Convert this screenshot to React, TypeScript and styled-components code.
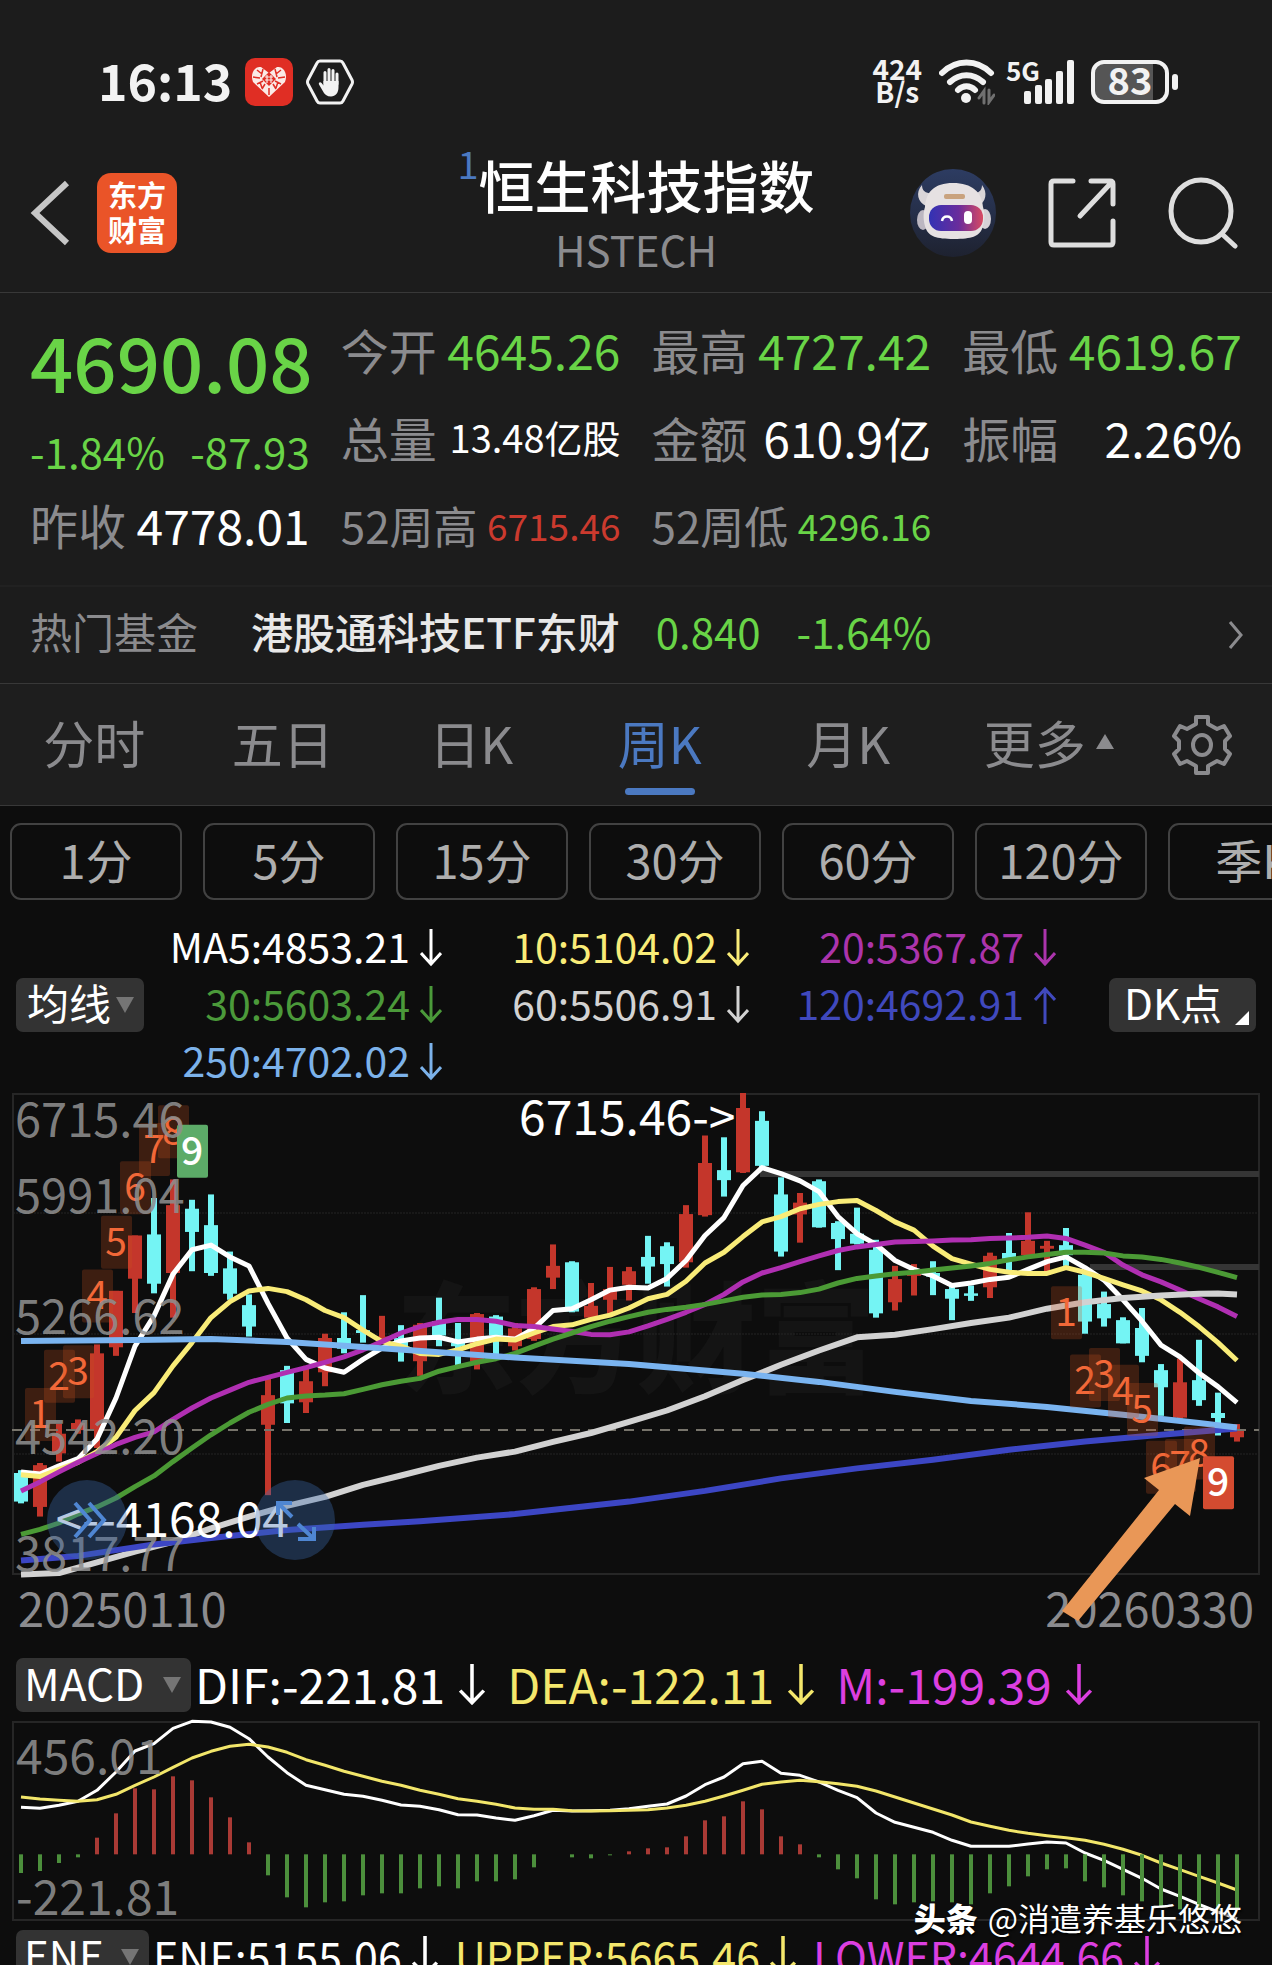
import React from "react";
import styled, { createGlobalStyle } from "styled-components";

const GlobalStyle = createGlobalStyle`
  * { box-sizing: border-box; }
  body {
    margin: 0;
    background: #0d0d0d;
    font-family: "Noto Sans CJK SC", "Noto Sans", sans-serif;
  }
  button { font-family: inherit; margin: 0; padding: 0; border: 0; background: none; color: inherit; cursor: pointer; }
  svg { display: block; flex: none; }
`;

const GREEN = "#69d447";
const RED = "#c4362b";
const CYAN = "#74f4f4";
const GREY = "#8b8b8e";
const BLUE = "#4b79c1";

/* ---------- layout ---------- */

const Screen = styled.main`
  position: relative;
  height: 100vh;
  overflow: hidden;
  background: #0d0d0d;
  color: #fff;
`;

const Top = styled.div`
  background: #1c1c1c;
`;

const StatusBar = styled.div`
  height: 130px;
  padding: 34px 94px 0 98px;
  display: flex;
  align-items: center;
  justify-content: space-between;
  color: #f2f2f2;
  font-weight: 700;
`;

const StatusGroup = styled.div<{ $gap: number }>`
  display: flex;
  align-items: center;
  gap: ${(p) => p.$gap}px;
`;

const Clock = styled.span`
  font-size: 50px;
  line-height: 56px;
  padding-bottom: 6px;
`;

const NetSpeed = styled.span`
  font-size: 28px;
  line-height: 23px;
  text-align: center;
  padding-bottom: 4px;
`;

const Signal = styled.div`
  display: flex;
  align-items: flex-start;
  margin-left: -6px;
`;

const SignalLabel = styled.span`
  font-size: 26px;
  line-height: 20px;
  margin-right: -16px;
`;

const Battery = styled.div`
  display: flex;
  align-items: center;
  gap: 3px;
  &::after {
    content: "";
    width: 6px;
    height: 16px;
    border-radius: 3px;
    background: #f2f2f2;
  }
`;

const BatteryBody = styled.span`
  width: 78px;
  height: 44px;
  border: 4px solid #f2f2f2;
  border-radius: 13px;
  background: linear-gradient(90deg, #555 83%, transparent 83%);
  font-size: 38px;
  line-height: 30px;
  text-align: center;
`;

const Header = styled.header`
  height: 163px;
  padding: 4px 30px 0;
  border-bottom: 1px solid #383838;
  display: grid;
  grid-template-columns: 1fr auto 1fr;
  align-items: center;
`;

const HeaderSide = styled.div<{ $end?: boolean }>`
  display: flex;
  align-items: center;
  justify-content: ${(p) => (p.$end ? "flex-end" : "flex-start")};
  gap: ${(p) => (p.$end ? 52 : 27)}px;
  padding-right: ${(p) => (p.$end ? 4 : 0)}px;
`;

const AppLogo = styled.span`
  width: 80px;
  height: 80px;
  border-radius: 14px;
  background: #ea5428;
  font-size: 29px;
  font-weight: 700;
  line-height: 35px;
  text-align: center;
  padding-top: 4px;
`;

const TitleBlock = styled.div`
  text-align: center;
`;

const Title = styled.h1`
  margin: 0;
  display: flex;
  justify-content: center;
  font-size: 56px;
  font-weight: 500;
  line-height: 72px;
  padding-bottom: 6px;
`;

const TitleMark = styled.sup`
  font-size: 38px;
  font-weight: 400;
  line-height: 30px;
  color: ${BLUE};
`;

const Subtitle = styled.div`
  font-size: 42px;
  line-height: 46px;
  padding-bottom: 6px;
  color: ${GREY};
`;

const Quote = styled.section`
  height: 294px;
  padding: 12px 30px 0;
  border-bottom: 2px solid #212121;
  display: grid;
  grid-template-columns: repeat(4, minmax(0, 1fr));
  column-gap: 31px;
  align-items: start;
`;

const QuoteMain = styled.div`
  padding-top: 4px;
`;

const Price = styled.div`
  font-size: 76px;
  font-weight: 500;
  line-height: 102px;
  color: ${GREEN};
`;

const Change = styled.div`
  display: flex;
  justify-content: space-between;
  font-size: 42px;
  line-height: 80px;
  color: ${GREEN};
`;

const QuoteGrid = styled.div`
  grid-column: 2 / 5;
  display: grid;
  grid-template-columns: repeat(3, minmax(0, 1fr));
  column-gap: 31px;
`;

const StatRow = styled.div<{ $h: number }>`
  height: ${(p) => p.$h}px;
  display: flex;
  align-items: center;
  justify-content: space-between;
  white-space: nowrap;
`;

const StatLabel = styled.span<{ $size: number }>`
  font-size: ${(p) => p.$size}px;
  line-height: 60px;
  color: ${GREY};
`;

const StatValue = styled.span<{ $size: number; $color: string }>`
  font-size: ${(p) => p.$size}px;
  line-height: 60px;
  color: ${(p) => p.$color};
`;

const FundRow = styled.a`
  height: 97px;
  padding: 0 28px 9px 30px;
  border-bottom: 1px solid #383838;
  display: flex;
  align-items: center;
  color: #e8e8e8;
  text-decoration: none;
  font-size: 42px;
  line-height: 60px;
  white-space: nowrap;
  svg { margin-left: auto; margin-top: 8px; }
`;

const FundLabel = styled.span`
  color: ${GREY};
  margin-right: 53px;
`;

const FundName = styled.span`
  font-weight: 500;
  margin-right: 36px;
`;

const FundValue = styled.span`
  color: ${GREEN};
  margin-right: 36px;
`;

const Tabs = styled.nav`
  height: 122px;
  background: #1e1e1e;
  border-bottom: 1px solid #383838;
  display: grid;
  grid-template-columns: repeat(6, 1fr) 141px;
`;

const Tab = styled.button<{ $active?: boolean; $more?: boolean }>`
  position: relative;
  display: flex;
  align-items: center;
  justify-content: center;
  gap: 10px;
  padding-bottom: 6px;
  padding-left: ${(p) => (p.$more ? 24 : 0)}px;
  font-size: 51px;
  line-height: 70px;
  color: ${(p) => (p.$active ? BLUE : GREY)};
  &::after {
    content: "";
    display: ${(p) => (p.$active ? "block" : "none")};
    position: absolute;
    bottom: 10px;
    left: 50%;
    width: 70px;
    margin-left: -35px;
    height: 7px;
    border-radius: 4px;
    background: ${BLUE};
  }
`;

const SettingsButton = styled.button`
  display: flex;
  align-items: center;
  justify-content: center;
`;

const Chips = styled.div`
  display: flex;
  gap: 21px;
  padding: 17px 10px 0;
  overflow: hidden;
`;

const Chip = styled.button`
  flex: none;
  width: 172px;
  height: 77px;
  border: 2px solid #424242;
  border-radius: 11px;
  font-size: 47px;
  line-height: 66px;
  padding-bottom: 6px;
  color: #aeaeae;
`;

const Legend = styled.div`
  display: flex;
  align-items: center;
  padding: 19px 16px 3px;
`;

const LegendGrid = styled.div`
  flex: 1;
  display: grid;
  grid-template-columns: repeat(3, minmax(0, 1fr));
  margin-left: -9px;
  margin-right: 53px;
`;

const PickerButton = styled.button<{ $w: number; $size?: number }>`
  flex: none;
  width: ${(p) => p.$w}px;
  height: 54px;
  border-radius: 7px;
  background: #333;
  font-size: ${(p) => p.$size ?? 42}px;
  line-height: 48px;
  display: flex;
  align-items: center;
  justify-content: space-between;
  padding: 0 10px 0 8px;
  white-space: nowrap;
  span { padding-bottom: 6px; }
`;

const MaButton = styled(PickerButton)`
  padding-left: 11px;
`;

const DkButton = styled(PickerButton)`
  padding: 0 7px 0 15px;
  svg { align-self: flex-end; margin-bottom: 7px; }
`;

const Reading = styled.span<{ $color: string; $size: number }>`
  display: flex;
  align-items: center;
  justify-content: flex-end;
  gap: ${(p) => (p.$size > 44 ? 14 : 10)}px;
  height: 57px;
  font-size: ${(p) => p.$size}px;
  line-height: 50px;
  color: ${(p) => p.$color};
  white-space: nowrap;
  span { padding-bottom: 5px; }
`;

const ChartFrame = styled.div`
  padding: 0 12px;
`;

const ChartSvg = styled.svg`
  width: 100%;
  height: auto;
  position: relative;
  overflow: visible;
  text { font-family: "Noto Sans CJK SC", "Noto Sans", sans-serif; }
`;

const Dates = styled.div`
  display: flex;
  justify-content: space-between;
  padding: 0 18px;
  height: 84px;
  font-size: 47px;
  line-height: 64px;
  color: ${GREY};
`;

const IndicatorRow = styled.div<{ $gap: number }>`
  display: flex;
  align-items: center;
  height: 52px;
  padding: 0 16px;
  gap: ${(p) => p.$gap}px;
`;

const IndicatorLead = styled.div`
  display: flex;
  align-items: center;
  gap: 4px;
`;

const MacdFrame = styled(ChartFrame)`
  padding-top: 10px;
  padding-bottom: 10px;
`;

const Watermark = styled.div`
  position: absolute;
  right: 30px;
  bottom: 25px;
  font-size: 32px;
  line-height: 46px;
  text-shadow: 1px 2px 2px rgba(0, 0, 0, 0.8);
  white-space: nowrap;
  b { font-weight: 900; margin-right: 10px; }
`;

/* ---------- data ---------- */

// [rising, high, low, body top, body bottom]; 2.8 levels make one pixel, measured down from the frame.
const LEVEL = 2.8;
const TOP_LEVEL = 36;
type Candle = [number, number, number, number, number];
const candles: Candle[] = [
  [0, 1092, 1185, 1100, 1180], [1, 1072, 1222, 1078, 1195], [1, 962, 1068, 990, 1045], [1, 950, 990, 960, 980],
  [1, 740, 1030, 765, 980], [1, 590, 772, 590, 748], [1, 435, 652, 435, 556], [0, 330, 597, 432, 570],
  [1, 278, 665, 350, 540], [0, 335, 535, 360, 425], [0, 320, 548, 406, 540], [0, 480, 615, 527, 598],
  [0, 600, 718, 630, 690], [1, 830, 1162, 882, 965], [0, 800, 960, 812, 905], [1, 800, 932, 843, 902],
  [1, 710, 857, 722, 818], [0, 650, 765, 722, 752], [0, 602, 735, 700, 708], [1, 660, 725, 718, 728],
  [0, 686, 788, 722, 745], [1, 680, 828, 685, 787], [0, 609, 745, 675, 715], [0, 680, 798, 736, 745],
  [1, 652, 810, 655, 788], [0, 658, 768, 662, 715], [1, 680, 757, 695, 745], [1, 580, 730, 585, 725],
  [1, 460, 585, 520, 553], [0, 507, 650, 510, 648], [1, 568, 668, 632, 665], [1, 523, 662, 585, 615],
  [1, 523, 617, 535, 573], [0, 436, 570, 495, 522], [0, 454, 578, 465, 515], [1, 350, 525, 375, 510],
  [1, 155, 382, 232, 378], [0, 160, 326, 252, 280], [1, 36, 260, 78, 258], [0, 87, 245, 114, 240],
  [0, 272, 494, 320, 480], [1, 316, 455, 343, 376], [0, 278, 413, 283, 412], [0, 395, 532, 400, 445],
  [0, 357, 460, 430, 458], [0, 447, 665, 475, 653], [1, 520, 645, 557, 622], [1, 515, 603, 540, 548],
  [0, 507, 602, 540, 550], [0, 570, 672, 585, 612], [0, 575, 618, 597, 604], [1, 483, 610, 492, 580],
  [0, 428, 540, 484, 500], [1, 370, 495, 450, 490], [1, 450, 535, 464, 472], [0, 414, 520, 462, 490],
  [0, 540, 710, 545, 676], [0, 592, 690, 627, 667], [0, 664, 737, 672, 737], [0, 638, 790, 694, 772],
  [0, 795, 940, 812, 860], [1, 780, 948, 846, 945], [0, 727, 912, 840, 896], [0, 875, 995, 932, 946],
  [1, 963, 1012, 980, 1000],
];

const ma5 = [1097, 1103, 1080, 1060, 1005, 890, 745, 660, 543, 475, 462, 495, 520, 625, 722, 782, 806, 818, 782, 750, 730, 722, 720, 733, 725, 720, 725, 695, 645, 640, 615, 588, 580, 582, 555, 505, 435, 385, 295, 245, 262, 282, 312, 382, 430, 460, 505, 530, 548, 575, 568, 558, 552, 530, 508, 495, 525, 560, 615, 675, 742, 775, 820, 858, 903];
const ma10 = [1105, 1110, 1090, 1070, 1040, 1000, 925, 875, 800, 735, 665, 620, 590, 583, 592, 615, 645, 665, 700, 732, 745, 765, 768, 755, 738, 725, 728, 708, 690, 685, 670, 658, 638, 612, 600, 563, 512, 482, 438, 397, 382, 360, 348, 340, 337, 365, 397, 420, 465, 500, 515, 530, 538, 541, 541, 525, 538, 555, 573, 590, 615, 650, 690, 735, 785];
const ma20 = [1150, 1125, 1097, 1070, 1045, 1020, 1000, 985, 950, 918, 890, 868, 846, 832, 818, 805, 790, 775, 755, 732, 708, 690, 678, 670, 670, 675, 687, 690, 697, 704, 712, 713, 705, 688, 670, 650, 628, 600, 565, 540, 525, 508, 492, 477, 467, 460, 453, 452, 450, 448, 447, 443, 442, 440, 436, 443, 462, 482, 518, 545, 565, 588, 612, 635, 662];
const ma30 = [1272, 1258, 1240, 1215, 1195, 1170, 1138, 1108, 1068, 1030, 993, 960, 930, 908, 890, 884, 882, 878, 866, 853, 843, 835, 815, 802, 790, 780, 765, 745, 725, 708, 690, 675, 662, 650, 642, 636, 628, 618, 608, 602, 600, 595, 585, 568, 555, 548, 542, 538, 532, 526, 520, 513, 503, 495, 488, 482, 482, 484, 492, 495, 502, 512, 524, 538, 553];
const ma60 = [[0, 1384], [2, 1380], [4, 1350], [6, 1320], [8, 1293], [10, 1255], [12, 1222], [14, 1192], [16, 1167], [18, 1133], [20, 1107], [22, 1080], [24, 1057], [26, 1040], [28, 1013], [30, 988], [32, 957], [34, 925], [36, 885], [38, 840], [40, 797], [42, 757], [44, 720], [46, 713], [48, 697], [50, 680], [52, 665], [54, 640], [56, 622], [58, 610], [60, 603], [62, 598], [63, 597], [64, 600]];
const ma120 = [[0, 1345], [3, 1332], [7, 1300], [10, 1282], [14, 1260], [18, 1245], [21, 1235], [26, 1215], [32, 1180], [36, 1150], [40, 1115], [44, 1087], [48, 1063], [52, 1035], [56, 1012], [60, 993], [64, 975]];
const ma250 = [[0, 730], [6, 728], [10, 725], [14, 733], [18, 747], [22, 762], [26, 777], [32, 795], [38, 822], [42, 845], [46, 873], [50, 898], [54, 915], [58, 937], [62, 960], [64, 973]];

// [candle index, level of the upper edge, digit]
const counts: [number, number, number][] = [
  [1, 862, 1], [2, 755, 2], [3, 742, 3], [4, 530, 4], [5, 380, 5], [6, 227, 6], [7, 120, 7], [8, 70, 8], [9, 125, 9],
  [55, 577, 1], [56, 768, 2], [57, 750, 3], [58, 797, 4], [59, 848, 5], [60, 1010, 6], [61, 1005, 7], [62, 970, 8], [63, 1053, 9],
];

const macdBars = [728, 722, 698, 681, 622, 549, 474, 477, 438, 450, 501, 561, 636, 735, 801, 831, 816, 813, 795, 789, 789, 774, 768, 774, 753, 753, 747, 711, 672, 681, 684, 675, 663, 654, 651, 618, 570, 558, 513, 537, 618, 642, 681, 717, 744, 807, 822, 816, 813, 816, 822, 789, 768, 738, 717, 714, 753, 771, 795, 813, 828, 837, 840, 840, 838];
const dif = [531, 534, 525, 513, 480, 425, 362, 340, 294, 273, 275, 291, 325, 380, 427, 465, 478, 492, 498, 510, 524, 528, 538, 553, 554, 563, 570, 556, 540, 542, 541, 540, 535, 528, 521, 497, 463, 440, 400, 393, 429, 435, 455, 480, 502, 548, 576, 591, 606, 630, 648, 648, 648, 641, 635, 638, 668, 690, 717, 744, 776, 798, 822, 845, 865];
const dea = [500, 506, 510, 513, 508, 492, 465, 440, 411, 383, 363, 348, 342, 350, 366, 388, 405, 423, 438, 453, 465, 480, 492, 505, 513, 522, 533, 537, 537, 541, 542, 541, 540, 538, 533, 525, 513, 497, 480, 462, 455, 450, 454, 460, 468, 482, 500, 518, 536, 554, 575, 588, 600, 609, 616, 622, 630, 642, 657, 675, 698, 718, 738, 758, 779];

const barX = (i: number) => 9 + 19 * i;
const levelY = (v: number) => (v - TOP_LEVEL) / LEVEL;
const macdY = (v: number) => (v - 272) / 3;

const trace = (values: number[], y: (v: number) => number) =>
  values.map((v, i) => `${barX(i)},${y(v).toFixed(1)}`).join(" ");
const tracePairs = (pairs: number[][]) =>
  pairs.map(([i, v]) => `${barX(i)},${levelY(v).toFixed(1)}`).join(" ");

/* ---------- icons ---------- */

const Arrow = ({ up, big }: { up?: boolean; big?: boolean }) => (
  <svg width={big ? 26 : 22} height={big ? 42 : 38} viewBox="0 0 22 38" preserveAspectRatio="none" fill="none" stroke="currentColor" strokeWidth="3" role="img" aria-label={up ? "上升" : "下降"}>
    {up ? <path d="M11 38V3M1 14L11 3l10 11" /> : <path d="M11 0v35M1 24l10 11 10-11" />}
  </svg>
);

const DownTriangle = () => (
  <svg width="18" height="16" viewBox="0 0 18 16" fill="#757575"><path d="M0 0h18L9 16z" /></svg>
);

const PddIcon = () => (
  <svg width="48" height="48" viewBox="0 0 48 48">
    <rect width="48" height="48" rx="10" fill="#e02e24" />
    <path d="M24 39L8 24c-2-5-1-10 2-13 2-2 4-2 6-2l8 6 8-6c2 0 4 0 6 2 3 3 4 8 2 13z" fill="#fbeae6" />
    <path d="M12 12l5 4M18 11l-2 8M30 11l2 8M36 12l-5 4M8 19l7 1M33 20l7-1M12 26l6-3M36 26l-6-3M17 31l3-5M31 31l-3-5M24 37v-7M15 24l2 6M33 24l-2 6" stroke="#e02e24" strokeWidth="1.500" />
    <path d="M24 14l7 7-7 7-7-7z" fill="#e02e24" />
    <path d="M20 19h8M20 22h8M22 17v8M26 17v8" stroke="#fbeae6" strokeWidth="1.200" />
  </svg>
);

const HandIcon = () => (
  <svg width="48" height="46" viewBox="0 0 48 46">
    <path d="M14 2h20q2 0 3 2l9 17q1 2 0 4l-9 17q-1 2-3 2H14q-2 0-3-2L2 25q-1-2 0-4l9-17q1-2 3-2z" fill="none" stroke="#f2f2f2" strokeWidth="3" />
    <path d="M19 25V13.500M23 24V10.500M27 24V11.500M31 25V15" stroke="#f2f2f2" strokeWidth="3" strokeLinecap="round" />
    <path d="M17.500 22h15v6c0 6-3 9.500-7.500 9.500-4 0-6.500-2-8.500-6L13 25.500c-.800-2 1.300-3 2.600-1.500l1.900 2.500z" fill="#f2f2f2" />
  </svg>
);

const WifiIcon = () => (
  <svg width="56" height="46" viewBox="0 0 56 46" fill="none" stroke="#f2f2f2" strokeLinecap="round">
    <path d="M3 14c14-14 35-14 49 0" strokeWidth="6" />
    <path d="M11 23c10-9 23-9 33 0" strokeWidth="6" />
    <path d="M19 31c5-5 12-5 17 0" strokeWidth="6" />
    <circle cx="27" cy="39" r="5" fill="#f2f2f2" stroke="none" />
    <path d="M45 44V32l-5 7M50 31v12l5-7" stroke="#707070" strokeWidth="3" />
  </svg>
);

const SignalIcon = () => (
  <svg width="50" height="44" viewBox="0 0 50 44" fill="#f2f2f2">
    <rect x="0" y="31" width="7" height="13" rx="2" />
    <rect x="11" y="25" width="7" height="19" rx="2" />
    <rect x="21" y="19" width="7" height="25" rx="2" />
    <rect x="32" y="11" width="7" height="33" rx="2" />
    <rect x="43" y="0" width="7" height="44" rx="2" />
  </svg>
);

const BackIcon = () => (
  <svg width="40" height="66" viewBox="0 0 40 66" fill="none" stroke="#c6c6c6" strokeWidth="6"><path d="M37 3L5 33l32 30" /></svg>
);

const RobotIcon = () => (
  <svg width="86" height="88" viewBox="0 0 86 88">
    <defs>
      <linearGradient id="sky" x1="0" y1="0" x2="0" y2="1"><stop offset="0" stopColor="#2d3c62" /><stop offset="1" stopColor="#1e2230" /></linearGradient>
      <linearGradient id="visor" x1="0" y1="0" x2="1" y2="0"><stop offset="0" stopColor="#3232b4" /><stop offset=".55" stopColor="#6a2c9c" /><stop offset="1" stopColor="#d84a62" /></linearGradient>
    </defs>
    <ellipse cx="43" cy="44" rx="43" ry="44" fill="url(#sky)" />
    <path d="M12 16c-7 8-4 17 4 21l9-13c-8 1-13-1-13-8zM72 16c6 8 4 17-4 21l-9-13c8 1 13-1 13-8z" fill="#d9d5d8" />
    <ellipse cx="13" cy="51" rx="6" ry="10" fill="#bcb7c1" />
    <ellipse cx="75" cy="50" rx="6" ry="10" fill="#d6d1d6" />
    <path d="M43 14c19 0 29 9 30 24 2 6 2 14-1 22-3 7-10 10-28 10s-25-3-28-10c-3-8-3-16-1-22 1-15 9-24 28-24z" fill="#e6e1e2" />
    <rect x="34" y="25" width="21" height="5" rx="2" fill="#c9a27e" />
    <rect x="19" y="36" width="54" height="26" rx="12" fill="url(#visor)" />
    <path d="M32 52c1-6 9-6 10 0" fill="none" stroke="#fff" strokeWidth="2.500" />
    <rect x="54" y="42" width="8" height="13" rx="4" fill="#fff" />
  </svg>
);

const ShareIcon = () => (
  <svg width="68" height="70" viewBox="0 0 68 70" fill="none" stroke="#dedede" strokeWidth="5" strokeLinecap="round">
    <path d="M25 3H6q-3 0-3 3v58q0 3 3 3h56q3 0 3-3V43M43 3h19q3 0 3 3v20M63 5L32 38" />
  </svg>
);

const SearchIcon = () => (
  <svg width="70" height="72" viewBox="0 0 70 72" fill="none" stroke="#dedede" strokeWidth="5" strokeLinecap="round">
    <ellipse cx="33" cy="34" rx="30" ry="31" /><path d="M54 57l13 12" />
  </svg>
);

const GearIcon = () => (
  <svg width="60" height="60" viewBox="0 0 60 60" fill="none" stroke={GREY} strokeWidth="4" strokeLinejoin="round">
    <path d="M24 2h12v7l9 5 7-3 6 10-5 5v8l5 5-6 10-7-3-9 5v7H24v-7l-9-5-7 3L2 39l5-5v-8l-5-5L8 11l7 3 9-5z" />
    <ellipse cx="30" cy="30" rx="9" ry="10" />
  </svg>
);

/* ---------- charts ---------- */

const Line = ({ points, color, width = 5 }: { points: string; color: string; width?: number }) => (
  <polyline points={points} fill="none" stroke={color} strokeWidth={width} strokeLinejoin="round" />
);

const CandleChart = () => (
  <ChartSvg viewBox="0 0 1248 482" role="img" aria-label="周K线图">
    <text x="384" y="291" fontSize="120" fontWeight="900" fill="#141414">东方财富</text>
    <rect x="1" y="1" width="1246" height="480" fill="none" stroke="#262626" strokeWidth="2" />
    {[120, 241, 361].map((y) => (
      <path key={y} d={`M1 ${y}H1247`} stroke="#242424" strokeWidth="1" strokeDasharray="2 1" />
    ))}
    <path d="M748 81H1247M1078 174H1247" stroke="#353535" strokeWidth="6" />
    {candles.map(([up, high, low, top, bottom], i) => (
      <g key={i} fill={up ? RED : CYAN}>
        <rect x={barX(i) - 3} y={levelY(high)} width="6" height={(low - high) / LEVEL} />
        <rect x={barX(i) - 7} y={levelY(top)} width="14" height={(bottom - top) / LEVEL} />
      </g>
    ))}
    <path d="M0 337H1247" stroke="#77746b" strokeWidth="2" strokeDasharray="10 8" />
    <Line points={trace(ma5, levelY)} color="#fff" />
    <Line points={trace(ma10, levelY)} color="#f9ec78" />
    <Line points={trace(ma20, levelY)} color="#b02fb2" />
    <Line points={trace(ma30, levelY)} color="#4b9a35" />
    <Line points={tracePairs(ma60)} color="#d2d2d2" width={6} />
    <Line points={tracePairs(ma120)} color="#3c46c4" width={6} />
    <Line points={tracePairs(ma250)} color="#7ab4f0" width={6} />
    {counts.map(([i, level, n]) => {
      const solid = n === 9;
      const fill = solid ? (i < 30 ? "#5cab68" : "#d44b30") : "#c8501e";
      return (
        <g key={i}>
          <rect x={barX(i) - 15} y={levelY(level)} width="31" height="53" rx="2" fill={fill} fillOpacity={solid ? 1 : 0.26} />
          <text x={barX(i)} y={levelY(level) + 40} fontSize="39" fontWeight={solid ? 500 : 400} textAnchor="middle" fill={solid ? "#fff" : "#f26838"}>{n}</text>
        </g>
      );
    })}
    {["6715.46", "5991.04", "5266.62", "4542.20", "3817.77"].map((label, i) => (
      <text key={label} x="3" y={[44, 120, 241, 361, 478][i]} fontSize="47" fill="#8e8e8e" fillOpacity=".9">{label}</text>
    ))}
    <text x="507" y="42" fontSize="48" fill="#fff">{"6715.46->"}</text>
    <text x="277" y="444" fontSize="48" fill="#fff" textAnchor="end">{"<--4168.04"}</text>
    <circle cx="75" cy="427" r="40" fill="#3a68ac" fillOpacity=".36" />
    <circle cx="283" cy="427" r="40" fill="#3a68ac" fillOpacity=".36" />
    <path d="M63 410l15 17-15 17M77 410l15 17-15 17M266 422v-12h14M266 410l14 14M302 434v12h-16M302 446l-16-15" fill="none" stroke="#4f86d2" strokeWidth="4" />
    <path d="M1050 518L1066 528 1163 411 1178 423 1188 365 1132 385 1147 397z" fill="#e99757" />
  </ChartSvg>
);

const MacdChart = () => (
  <ChartSvg viewBox="0 0 1248 200" role="img" aria-label="MACD">
    <rect x="1" y="1" width="1246" height="198" fill="none" stroke="#262626" strokeWidth="2" />
    <Line points={trace(dif, macdY)} color="#fff" width={3} />
    <Line points={trace(dea, macdY)} color="#f2e66a" width={3} />
    {macdBars.map((v, i) => (
      <rect key={i} x={barX(i) - 2} y={Math.min(macdY(v), macdY(672))} width="4" height={Math.abs(v - 672) / 3} fill={v < 672 ? "#a93a35" : "#4c8f3c"} />
    ))}
    <text x="4" y="53" fontSize="48" fill="#8e8e8e" fillOpacity=".9">456.01</text>
    <text x="4" y="194" fontSize="48" fill="#8e8e8e" fillOpacity=".9">-221.81</text>
  </ChartSvg>
);

/* ---------- page ---------- */

const stats: { label: string; value: string; color: string; labelSize?: number; size?: number }[] = [
  { label: "今开", value: "4645.26", color: GREEN },
  { label: "最高", value: "4727.42", color: GREEN },
  { label: "最低", value: "4619.67", color: GREEN },
  { label: "总量", value: "13.48亿股", color: "#fff", size: 38 },
  { label: "金额", value: "610.9亿", color: "#fff" },
  { label: "振幅", value: "2.26%", color: "#fff" },
  { label: "52周高", value: "6715.46", color: "#cb3a2e", labelSize: 44, size: 37 },
  { label: "52周低", value: "4296.16", color: GREEN, labelSize: 44, size: 37 },
];

const averages: { text: string; color: string; up?: boolean }[] = [
  { text: "MA5:4853.21", color: "#fff" },
  { text: "10:5104.02", color: "#f9ec78" },
  { text: "20:5367.87", color: "#ab34ac" },
  { text: "30:5603.24", color: "#4b9a3a" },
  { text: "60:5506.91", color: "#d2d2d2" },
  { text: "120:4692.91", color: "#4049bd", up: true },
  { text: "250:4702.02", color: "#7cb2ea" },
];

const MAGENTA = "#dc3fe0";
const YELLOW = "#f4e76c";

export default function App() {
  return (
    <Screen>
      <GlobalStyle />
      <Top>
        <StatusBar>
          <StatusGroup $gap={13}>
            <Clock>16:13</Clock>
            <PddIcon />
            <HandIcon />
          </StatusGroup>
          <StatusGroup $gap={17}>
            <NetSpeed>424<br />B/s</NetSpeed>
            <WifiIcon />
            <Signal><SignalLabel>5G</SignalLabel><SignalIcon /></Signal>
            <Battery><BatteryBody>83</BatteryBody></Battery>
          </StatusGroup>
        </StatusBar>
        <Header>
          <HeaderSide>
            <button aria-label="返回"><BackIcon /></button>
            <AppLogo>东方<br />财富</AppLogo>
          </HeaderSide>
          <TitleBlock>
            <Title><TitleMark>1</TitleMark>恒生科技指数</Title>
            <Subtitle>HSTECH</Subtitle>
          </TitleBlock>
          <HeaderSide $end>
            <button aria-label="智能助手"><RobotIcon /></button>
            <button aria-label="分享"><ShareIcon /></button>
            <button aria-label="搜索"><SearchIcon /></button>
          </HeaderSide>
        </Header>
        <Quote>
          <QuoteMain>
            <Price>4690.08</Price>
            <Change><span>-1.84%</span><span>-87.93</span></Change>
            <StatRow $h={66}>
              <StatLabel $size={48}>昨收</StatLabel>
              <StatValue $size={48} $color="#fff">4778.01</StatValue>
            </StatRow>
          </QuoteMain>
          <QuoteGrid>
            {stats.map((s) => (
              <StatRow key={s.label} $h={88}>
                <StatLabel $size={s.labelSize ?? 48}>{s.label}</StatLabel>
                <StatValue $size={s.size ?? 48} $color={s.color}>{s.value}</StatValue>
              </StatRow>
            ))}
          </QuoteGrid>
        </Quote>
        <FundRow href="#fund">
          <FundLabel>热门基金</FundLabel>
          <FundName>港股通科技ETF东财</FundName>
          <FundValue>0.840</FundValue>
          <FundValue>-1.64%</FundValue>
          <svg width="16" height="30" viewBox="0 0 16 30" fill="none" stroke={GREY} strokeWidth="3"><path d="M2 2l11 13L2 28" /></svg>
        </FundRow>
        <Tabs>
          <Tab>分时</Tab>
          <Tab>五日</Tab>
          <Tab>日K</Tab>
          <Tab $active>周K</Tab>
          <Tab>月K</Tab>
          <Tab $more>更多<svg width="18" height="15" viewBox="0 0 18 15" fill={GREY}><path d="M9 0l9 15H0z" /></svg></Tab>
          <SettingsButton aria-label="设置"><GearIcon /></SettingsButton>
        </Tabs>
      </Top>

      <Chips>
        {["1分", "5分", "15分", "30分", "60分", "120分", "季K"].map((c) => <Chip key={c}>{c}</Chip>)}
      </Chips>

      <Legend>
        <MaButton $w={128}><span>均线</span><DownTriangle /></MaButton>
        <LegendGrid>
          {averages.map((a) => (
            <Reading key={a.text} $color={a.color} $size={41}><span>{a.text}</span><Arrow up={a.up} /></Reading>
          ))}
        </LegendGrid>
        <DkButton $w={147}>
          <span>DK点</span>
          <svg width="14" height="14" viewBox="0 0 14 14" fill="#fff"><path d="M14 0v14H0z" /></svg>
        </DkButton>
      </Legend>

      <ChartFrame><CandleChart /></ChartFrame>
      <Dates><span>20250110</span><span>20260330</span></Dates>

      <IndicatorRow $gap={22}>
        <IndicatorLead>
          <PickerButton $w={175} $size={44}><span>MACD</span><DownTriangle /></PickerButton>
          <Reading $color="#fff" $size={48}><span>DIF:-221.81</span><Arrow big /></Reading>
        </IndicatorLead>
        <Reading $color={YELLOW} $size={48}><span>DEA:-122.11</span><Arrow big /></Reading>
        <Reading $color={MAGENTA} $size={48}><span>M:-199.39</span><Arrow big /></Reading>
      </IndicatorRow>
      <MacdFrame><MacdChart /></MacdFrame>
      <IndicatorRow $gap={17}>
        <IndicatorLead>
          <PickerButton $w={133}><span>ENE</span><DownTriangle /></PickerButton>
          <Reading $color="#fff" $size={43}><span>ENE:5155.06</span><Arrow big /></Reading>
        </IndicatorLead>
        <Reading $color={YELLOW} $size={43}><span>UPPER:5665.46</span><Arrow big /></Reading>
        <Reading $color={MAGENTA} $size={43}><span>LOWER:4644.66</span><Arrow big /></Reading>
      </IndicatorRow>

      <Watermark><b>头条</b>@消遣养基乐悠悠</Watermark>
    </Screen>
  );
}
